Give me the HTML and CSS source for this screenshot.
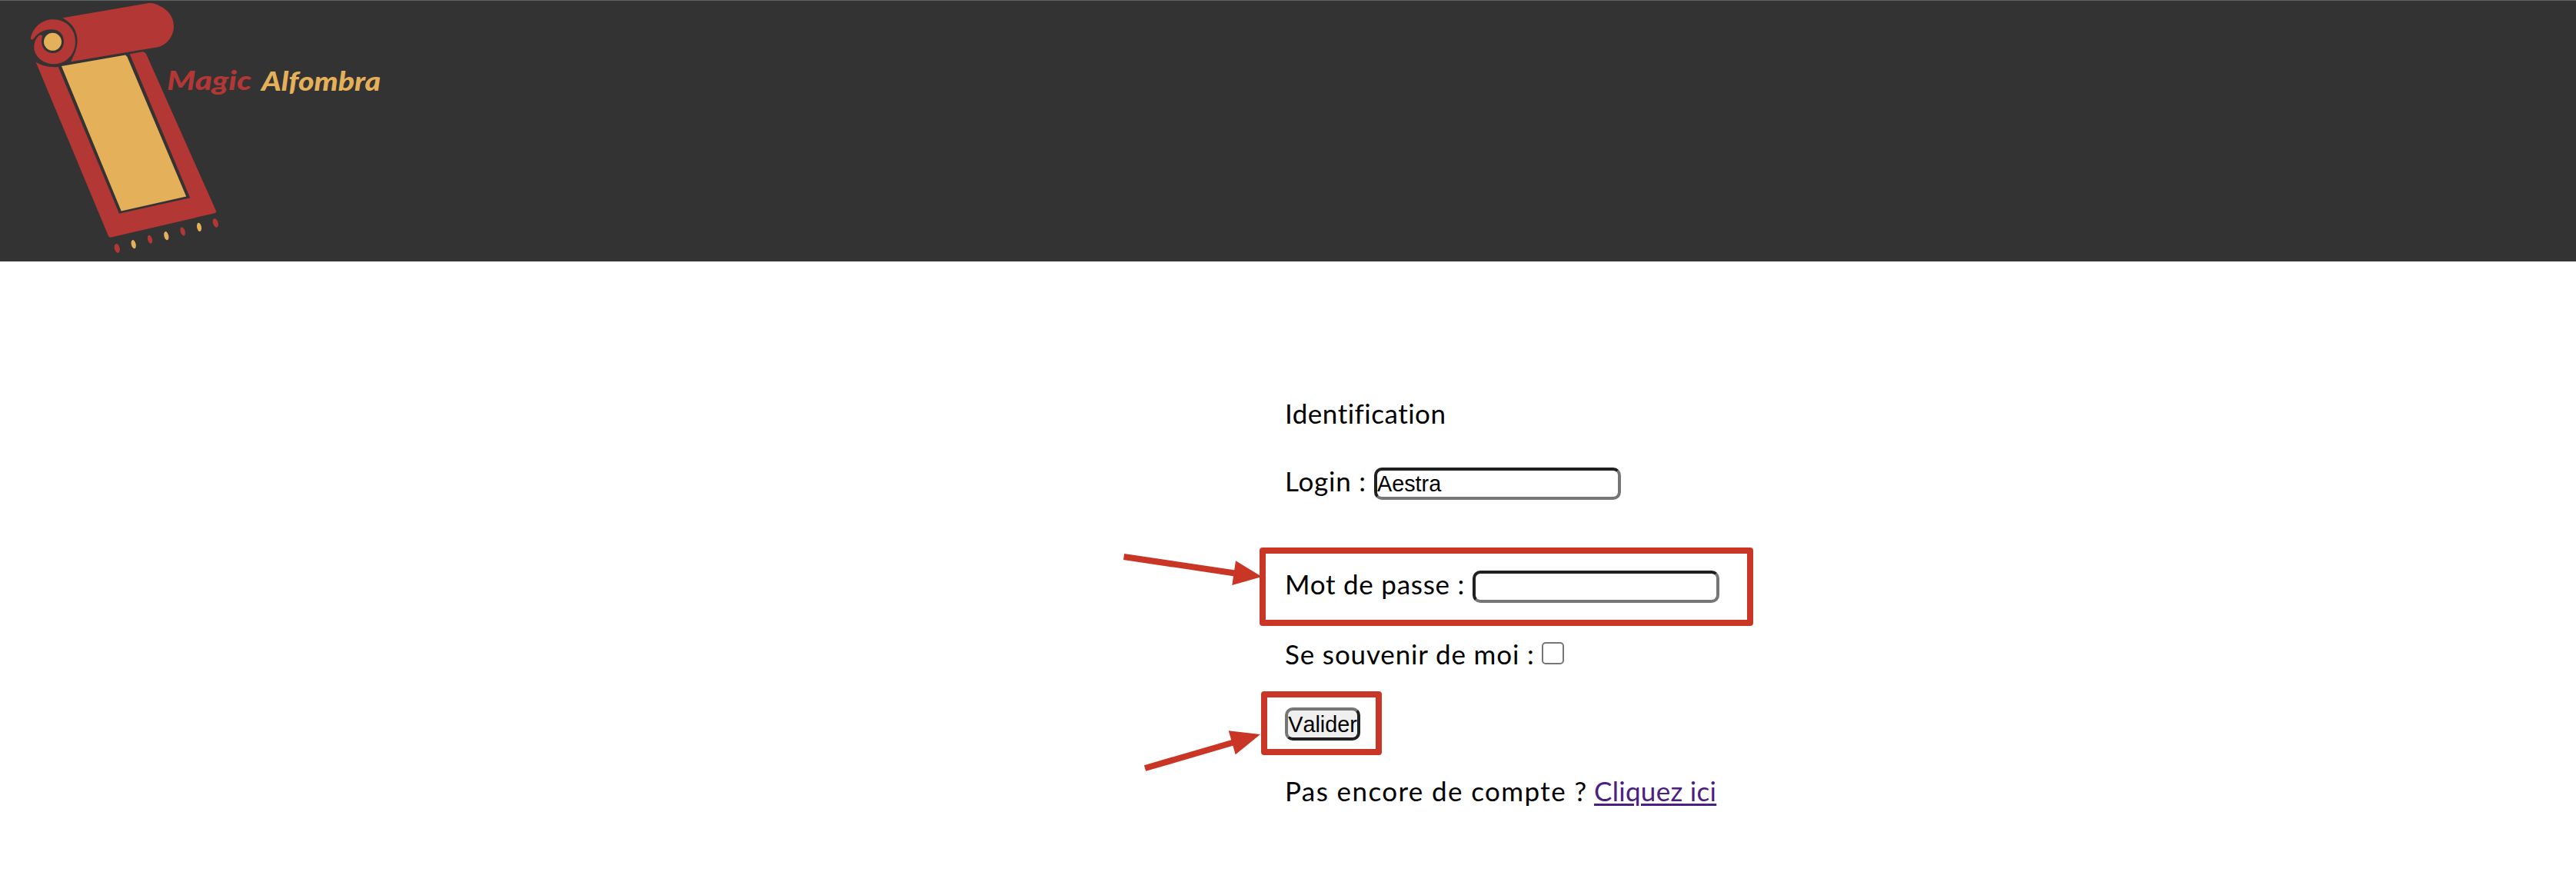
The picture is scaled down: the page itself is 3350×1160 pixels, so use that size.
FILE: index.html
```
<!DOCTYPE html>
<html lang="fr">
<head>
<meta charset="utf-8">
<title>Magic Alfombra</title>
<link rel="stylesheet" href="styles.css">
</head>
<body>
<header class="site-header">
  <svg class="logo" viewBox="0 0 540 340" role="img" aria-label="Magic Alfombra">
    <g class="logo-red">
      <path d="M81.5 23.3 L192 4.3 C198 3.3 204 5.5 209 8.5 C217 12 226 21 226 34 C226 47 217 59 204 61.5 L92 80.2 C96 72 100.5 64 100.5 53 C100.5 41 95 31 81.5 23.3Z"/>
      <path d="M40 49 C43 36 54 25.3 69 25.3 C86 25.3 98 38 98 54 C98 71 86 83.3 70 83.3 C55 83.3 44 72 44.3 61 C44.5 53 49 46 53 45.3 C55 45.5 55.3 47 54.5 50 C52.5 59 58 69 69 69 C78 69 83 62 83 54 C83 45 77 38.6 68 38.3 C57 38 49 43 44 50 C42 52.5 39 51.5 40 49Z"/>
      <path d="M46.5 80.5 C55 86 64 87.8 75.8 87 L155 277.7 L247.2 257.3 L168.7 70.3 L185 67.3 Q188 67 190 70 L281.3 275 Q281 277 278 277.5 L145 308.5 Q142 309.5 141 307Z"/>
      <ellipse cx="152.3" cy="323" rx="3.4" ry="6" transform="rotate(-14 152.3 323)"/>
      <ellipse cx="195" cy="311.3" rx="2.9" ry="5.6" transform="rotate(-16 195 311.3)"/>
      <ellipse cx="237.7" cy="301" rx="2.9" ry="5.8" transform="rotate(-18 237.7 301)"/>
      <ellipse cx="280.3" cy="290" rx="3.3" ry="6" transform="rotate(-18 280.3 290)"/>
    </g>
    <g class="logo-gold">
      <circle cx="68.5" cy="54.3" r="11.5"/>
      <path d="M80 86 L163.2 71.5 L165.5 74 L242.2 255.5 L157.7 274.5Z"/>
      <ellipse cx="173.7" cy="317.7" rx="2.9" ry="5.7" transform="rotate(-14 173.7 317.7)"/>
      <ellipse cx="216.3" cy="306.7" rx="2.9" ry="5.7" transform="rotate(-14 216.3 306.7)"/>
      <ellipse cx="259" cy="295.3" rx="2.9" ry="5.7" transform="rotate(-10 259 295.3)"/>
    </g>
    <text class="logo-text logo-red" x="217" y="117" textLength="110" lengthAdjust="spacingAndGlyphs">Magic</text>
    <text class="logo-text logo-gold" x="340" y="118" textLength="155" lengthAdjust="spacingAndGlyphs">Alfombra</text>
  </svg>
</header>
<main class="page">
  <form class="login-form">
    <div class="row row-title"><span class="t-title">Identification</span></div>
    <div class="row row-login">
      <label class="label-login" for="login">Login :</label>
      <input class="field" id="login" type="text" value="Aestra">
    </div>
    <div class="row row-pass">
      <label class="label-pass" for="pass">Mot de passe :</label>
      <input class="field" id="pass" type="password">
      <span class="mark mark-pass"></span>
    </div>
    <div class="row row-remember">
      <label class="label-remember" for="remember">Se souvenir de moi :</label>
      <input class="check" id="remember" type="checkbox">
    </div>
    <div class="row row-submit">
      <button class="submit" type="button">Valider</button>
      <span class="mark mark-submit"></span>
    </div>
    <div class="row row-signup">
      <span class="label-signup">Pas encore de compte ?</span>
      <a class="link" href="#">Cliquez ici</a>
    </div>
  </form>
  <svg class="arrows" viewBox="0 0 200 300">
    <path class="shaft" d="M21.5 34 L166 55.5 M49 309 L164 275.5"/>
    <path class="tip" d="M167 39.3 L201 60 L162.3 71Z M157.7 260.3 L199 265 L166.7 291.3Z"/>
  </svg>
</main>
</body>
</html>
```
FILE: styles.css
```
body {
  margin: 0;
  background: #fff;
  color: #000;
  font-family: Lato, sans-serif;
  font-size: 35px;
  line-height: 45px;
  font-variant-ligatures: none;
}

.site-header {
  box-sizing: border-box;
  height: 340px;
  background: #333;
  box-shadow: inset 0 1px #5f6162;
}
.logo { display: block; width: 540px; height: 340px; }
.logo-red { fill: #b23735; }
.logo-gold { fill: #e4b05a; }
.logo-text {
  font-family: Lato, sans-serif;
  font-size: 34px;
  font-weight: 900;
  font-style: italic;
}

.page { position: relative; height: 820px; }
.login-form {
  padding: 175px 0 0 1671px;
  display: flex;
  flex-direction: column;
}
.row {
  position: relative;
  display: flex;
  height: 45px;
  align-items: center;
  white-space: nowrap;
}
.row-login { margin-top: 43px; }
.row-pass { margin-top: 89px; }
.row-remember { margin-top: 46px; }
.row-submit { margin-top: 46px; }
.row-signup { margin-top: 42px; }

.t-title { letter-spacing: 0.5px; }
.label-login { width: 116px; letter-spacing: 0.8px; }
.label-pass { width: 244px; letter-spacing: 0.75px; }
.label-remember { width: 334px; letter-spacing: 0.85px; }
.label-signup { width: 402px; letter-spacing: 1.4px; }

.field {
  box-sizing: border-box;
  width: 321px;
  height: 42px;
  margin: 7px 0 0;
  padding: 0;
  border: 4px solid #767676;
  border-top-color: #1f2020;
  border-left-color: #1f2020;
  border-radius: 10px;
  background: #fff;
  color: #000;
  font: 28.8px "Liberation Sans", sans-serif;
  outline: none;
}
.check {
  appearance: none;
  box-sizing: border-box;
  width: 29px;
  height: 29px;
  margin: 0 0 2px;
  border: 2px solid #767676;
  border-radius: 5px;
  background: #fff;
}
.submit {
  box-sizing: border-box;
  width: 98px;
  height: 43px;
  padding: 1px 0 0;
  border: 4px solid #1f2020;
  border-top-color: #767676;
  border-left-color: #767676;
  border-radius: 10px;
  background: #efefef;
  color: #000;
  font: 28.8px "Liberation Sans", sans-serif;
  font-kerning: none;
}
.link {
  color: #4b2080;
  letter-spacing: 0.3px;
  text-decoration: underline;
  text-decoration-thickness: 3px;
  text-underline-offset: 3px;
}

/* Red frames and arrows that point out the fields to fill in */
.mark {
  position: absolute;
  box-sizing: border-box;
  border: 8px solid #c93625;
  border-radius: 4px;
  pointer-events: none;
}
.mark-pass { left: -33px; top: -25px; width: 642px; height: 102px; }
.mark-submit { left: -31px; top: -20px; width: 157px; height: 83px; }
.arrows {
  position: absolute;
  left: 1440px;
  top: 350px;
  width: 200px;
  height: 300px;
  overflow: visible;
}
.shaft { fill: none; stroke: #c93625; stroke-width: 8; }
.tip { fill: #c93625; }
```
